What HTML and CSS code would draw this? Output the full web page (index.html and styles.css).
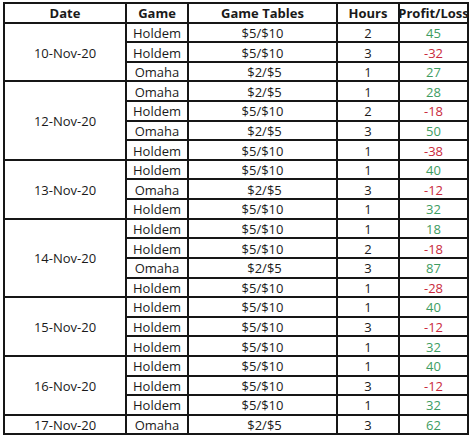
FILE: index.html
```html
<!DOCTYPE html>
<html>
<head>
<meta charset="utf-8">
<link rel="stylesheet" href="styles.css">
</head>
<body>
<div class="sheet">
  <div class="cell head">Date</div>
  <div class="cell head">Game</div>
  <div class="cell head">Game Tables</div>
  <div class="cell head">Hours</div>
  <div class="cell head">Profit/Loss</div>

  <div class="cell date span3">10-Nov-20</div>
  <div class="cell">Holdem</div><div class="cell">$5/$10</div><div class="cell">2</div><div class="cell pos">45</div>
  <div class="cell">Holdem</div><div class="cell">$5/$10</div><div class="cell">3</div><div class="cell neg">-32</div>
  <div class="cell">Omaha</div><div class="cell sm">$2/$5</div><div class="cell">1</div><div class="cell pos">27</div>

  <div class="cell date span4">12-Nov-20</div>
  <div class="cell">Omaha</div><div class="cell sm">$2/$5</div><div class="cell">1</div><div class="cell pos">28</div>
  <div class="cell">Holdem</div><div class="cell">$5/$10</div><div class="cell">2</div><div class="cell neg">-18</div>
  <div class="cell">Omaha</div><div class="cell sm">$2/$5</div><div class="cell">3</div><div class="cell pos">50</div>
  <div class="cell">Holdem</div><div class="cell">$5/$10</div><div class="cell">1</div><div class="cell neg">-38</div>

  <div class="cell date span3">13-Nov-20</div>
  <div class="cell">Holdem</div><div class="cell">$5/$10</div><div class="cell">1</div><div class="cell pos">40</div>
  <div class="cell">Omaha</div><div class="cell sm">$2/$5</div><div class="cell">3</div><div class="cell neg">-12</div>
  <div class="cell">Holdem</div><div class="cell">$5/$10</div><div class="cell">1</div><div class="cell pos">32</div>

  <div class="cell date span4">14-Nov-20</div>
  <div class="cell">Holdem</div><div class="cell">$5/$10</div><div class="cell">1</div><div class="cell pos">18</div>
  <div class="cell">Holdem</div><div class="cell">$5/$10</div><div class="cell">2</div><div class="cell neg">-18</div>
  <div class="cell">Omaha</div><div class="cell sm">$2/$5</div><div class="cell">3</div><div class="cell pos">87</div>
  <div class="cell">Holdem</div><div class="cell">$5/$10</div><div class="cell">1</div><div class="cell neg">-28</div>

  <div class="cell date span3">15-Nov-20</div>
  <div class="cell">Holdem</div><div class="cell">$5/$10</div><div class="cell">1</div><div class="cell pos">40</div>
  <div class="cell">Holdem</div><div class="cell">$5/$10</div><div class="cell">3</div><div class="cell neg">-12</div>
  <div class="cell">Holdem</div><div class="cell">$5/$10</div><div class="cell">1</div><div class="cell pos">32</div>

  <div class="cell date span3">16-Nov-20</div>
  <div class="cell">Holdem</div><div class="cell">$5/$10</div><div class="cell">1</div><div class="cell pos">40</div>
  <div class="cell">Holdem</div><div class="cell">$5/$10</div><div class="cell">3</div><div class="cell neg">-12</div>
  <div class="cell">Holdem</div><div class="cell">$5/$10</div><div class="cell">1</div><div class="cell pos">32</div>

  <div class="cell date">17-Nov-20</div>
  <div class="cell">Omaha</div><div class="cell sm">$2/$5</div><div class="cell">3</div><div class="cell pos">62</div>
</div>
</body>
</html>
```

FILE: styles.css
```css
html, body {
  margin: 0;
  padding: 0;
  background: #ffffff;
}

body {
  padding: 2px 0 0 3px;
  font-family: "Open Sans", "Liberation Sans", sans-serif;
  font-size: 13px;
  color: #1a1a1a;
}

.sheet {
  display: grid;
  grid-template-columns: 122px 62px 149px 62px 69px;
  grid-auto-rows: 19.62px;
  width: max-content;
  border-top: 2px solid #161616;
  border-left: 2px solid #161616;
}

.cell {
  box-sizing: border-box;
  border-right: 2px solid #161616;
  border-bottom: 2px solid #161616;
  display: flex;
  align-items: center;
  justify-content: center;
  line-height: 1;
  padding-top: 2px;
  white-space: pre;
}

.head {
  font-weight: bold;
}

.date {
  grid-column: 1;
}

.span3 {
  grid-row: span 3;
}

.span4 {
  grid-row: span 4;
}

.sm {
  padding-left: 4px;
}

.pos {
  color: #3d9c62;
}

.neg {
  color: #c92a3c;
}
```
